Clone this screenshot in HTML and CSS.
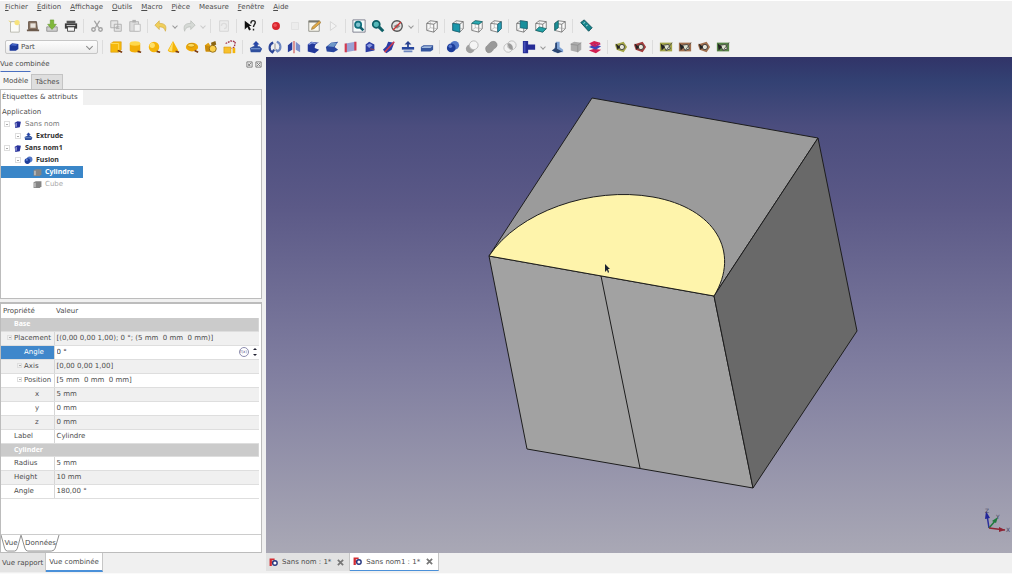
FILE: index.html
```html
<!DOCTYPE html>
<html lang="fr">
<head>
    <meta charset="UTF-8">
    <meta name="viewport" content="width=device-width, initial-scale=1.0">
    <title>Sans nom1 - Part</title>
    <link rel="stylesheet" href="styles.css">
</head>
<body>

    <!-- icons -->
    <svg class="defs" aria-hidden="true">
        <symbol id="new" viewBox="0 0 16 16"><path d="M4 3h7l3 3v9H4z" fill="#fbfbf8" stroke="#b5b5ac"/><circle cx="11.500" cy="4" r="3" fill="#f7e37c"/><path d="M2 2l3 2" stroke="#e8d46a"/></symbol>
        <symbol id="open" viewBox="0 0 16 16"><path d="M3 3h9l1 9H3z" fill="#8a7564" stroke="#5d4a3c"/><path d="M5 5h6v5H5z" fill="#e9e4dd"/><path d="M1 12h14v2H1z" fill="#6d5b4d"/></symbol>
        <symbol id="save" viewBox="0 0 16 16"><path d="M2 9h12v5H2z" fill="#cfcfcf" stroke="#8f8f8f"/><path d="M6 1h4v5h3l-5 6-5-6h3z" fill="#7fb83a" stroke="#5f9427" stroke-width=".6"/></symbol>
        <symbol id="print" viewBox="0 0 16 16"><path d="M3 2h10v3H3z" fill="#555"/><path d="M1 5h14v6H1z" fill="#3c3c3c"/><path d="M3 7h10v1H3z" fill="#ddd"/><path d="M4 9h8v5H4z" fill="#f6f6f6" stroke="#444"/></symbol>
        <symbol id="cut" viewBox="0 0 16 16"><g fill="none" stroke="#a2a2a2" stroke-width="1.600"><path d="M5 2l5 8M11 2l-5 8"/><circle cx="4" cy="12" r="2"/><circle cx="12" cy="12" r="2"/></g></symbol>
        <symbol id="copy" viewBox="0 0 16 16"><path d="M2 2h8v8H2zM6 6h8v8H6z" fill="#e6e6e6" stroke="#aaa"/><path d="M8 9h4M8 11h4" stroke="#aaa"/></symbol>
        <symbol id="paste" viewBox="0 0 16 16"><path d="M2 3h10v11H2z" fill="#dcdcdc" stroke="#b2b2b2"/><path d="M5 1h4v3H5z" fill="#b0b0b0"/><path d="M7 6h7v8H7z" fill="#f2f2f2" stroke="#bbb"/></symbol>
        <symbol id="undo" viewBox="0 0 16 16"><path d="M1 7l5-5v3c6 0 9 2 7 9-1-4-3-5-7-5v3z" fill="#f0cf5b" stroke="#cfa63a" stroke-width=".7"/></symbol>
        <symbol id="redo" viewBox="0 0 16 16"><path d="M15 7l-5-5v3c-6 0-9 2-7 9 1-4 3-5 7-5v3z" fill="#d5d9d5" stroke="#b2b6b2" stroke-width=".7"/></symbol>
        <symbol id="refresh" viewBox="0 0 16 16"><path d="M3 2h10v12H3z" fill="#ececec" stroke="#d2d2d2"/><path d="M5 8a3 3 0 1 1 3 3" fill="none" stroke="#dcdcdc" stroke-width="1.500"/></symbol>
        <symbol id="whats" viewBox="0 0 16 16"><path d="M2 2v10l3-3 2 4 2-1-2-4h3z" fill="#111"/><path d="M9 5c0-4 5-4 5-1 0 2-2 3-2 5M12 11v2" fill="none" stroke="#222" stroke-width="1.600"/></symbol>
        <symbol id="record" viewBox="0 0 16 16"><circle cx="8" cy="8" r="4.500" fill="#d9252d"/><circle cx="7" cy="7" r="2" fill="#ee5057"/></symbol>
        <symbol id="stop" viewBox="0 0 16 16"><path d="M4 4h8v8H4z" fill="#ececec" stroke="#e0e0e0"/></symbol>
        <symbol id="edit" viewBox="0 0 16 16"><path d="M2 2h12v12H2z" fill="#faf8ee" stroke="#8b8b84"/><path d="M2 2h12v2H2z" fill="#77776f"/><path d="M5 12l1-3 8-7 2 2-8 7z" fill="#e0a844" stroke="#7d6232" stroke-width=".6"/></symbol>
        <symbol id="play" viewBox="0 0 16 16"><path d="M5 3l7 5-7 5z" fill="#f3f3f3" stroke="#d3d3d3"/></symbol>
        <symbol id="fit" viewBox="0 0 16 16"><path d="M1 1h14v14H1z" fill="#f4fafa" stroke="#778"/><circle cx="7" cy="6.500" r="3.500" fill="#7fc3d0" stroke="#10707e" stroke-width="2"/><path d="M9 9l4 4" stroke="#10606e" stroke-width="3"/></symbol>
        <symbol id="fitsel" viewBox="0 0 16 16"><circle cx="6" cy="6" r="4" fill="#54b8b8" stroke="#0d5f66" stroke-width="2"/><path d="M9 9l5 5" stroke="#0d5f66" stroke-width="3.500"/></symbol>
        <symbol id="style" viewBox="0 0 16 16"><circle cx="8" cy="8" r="6" fill="#e4e4e4" stroke="#555" stroke-width="1.500"/><path d="M4 8l4-2 4 2-4 3z" fill="#8a8a8a"/><path d="M3.500 12.500l9-9" stroke="#c33" stroke-width="1.500"/></symbol>
        <!-- view cubes -->
        <symbol id="wire" viewBox="0 0 16 16"><path d="M2 5l4-3 8 1v8l-4 4-8-2zM2 5l8 1 4-3M10 6v9" fill="#fafafa" stroke="#666" stroke-width=".9" stroke-linejoin="round"/><path d="M6 2v8l8 1M6 10l-4 3" fill="none" stroke="#999" stroke-width=".6"/></symbol>
        <symbol id="v-front" viewBox="0 0 16 16"><use href="#wire"/><path d="M2 5l8 1v9l-8-2z" fill="#1a97ab" stroke="#0d5d70" stroke-width=".8"/></symbol>
        <symbol id="v-top" viewBox="0 0 16 16"><use href="#wire"/><path d="M2 5l4-3 8 1-4 3z" fill="#2aaab3" stroke="#0d6a70" stroke-width=".8"/></symbol>
        <symbol id="v-right" viewBox="0 0 16 16"><use href="#wire"/><path d="M10 6l4-3v8l-4 4z" fill="#2aa0b8" stroke="#0d5d70" stroke-width=".8"/></symbol>
        <symbol id="v-rear" viewBox="0 0 16 16"><use href="#wire"/><path d="M6 2l8 1v8l-8-1z" fill="#188f9c" stroke="#0d5d70" stroke-width=".8"/></symbol>
        <symbol id="v-bottom" viewBox="0 0 16 16"><use href="#wire"/><path d="M2 13l4-4 8 2-4 4z" fill="#22a2a8" stroke="#0d5d60" stroke-width=".8"/></symbol>
        <symbol id="v-left" viewBox="0 0 16 16"><use href="#wire"/><path d="M2 5l4-3v8l-4 3z" fill="#1a8f98" stroke="#0d5d60" stroke-width=".8"/></symbol>
        <symbol id="measure" viewBox="0 0 16 16"><path d="M2 4l4-3 9 9-4 4z" fill="#16858c" stroke="#0b4d55"/><path d="M5 5l2-1M8 8l2-1" stroke="#bfe8e8"/></symbol>
        <!-- primitives -->
        <symbol id="box" viewBox="0 0 16 16"><path d="M2 4l3-2h9v9l-3 3H2z" fill="#f6b90c" stroke="#d29206" stroke-width=".6"/><path d="M2 4h9v10" fill="none" stroke="#ffdf63"/><path d="M10 12l5 2" stroke="#7a3a10" stroke-width="2"/></symbol>
        <symbol id="cyl" viewBox="0 0 16 16"><path d="M2 4v8c1 3 11 3 12 0V4z" fill="#f2ae08"/><ellipse cx="8" cy="4" rx="6" ry="2.500" fill="#ffd84a"/><path d="M11 13l4 1" stroke="#7a3a10" stroke-width="2"/></symbol>
        <symbol id="sphere" viewBox="0 0 16 16"><circle cx="8" cy="8" r="6" fill="#f5b50a"/><circle cx="6" cy="6" r="3" fill="#ffe067"/><path d="M11 13l4 1" stroke="#7a3a10" stroke-width="2"/></symbol>
        <symbol id="cone" viewBox="0 0 16 16"><path d="M8 1l6 11c-1 3-11 3-12 0z" fill="#f4b40a"/><path d="M8 2l-1 11-4-1z" fill="#ffe067"/><path d="M11 13l4 1" stroke="#7a3a10" stroke-width="2"/></symbol>
        <symbol id="torus" viewBox="0 0 16 16"><ellipse cx="8" cy="8" rx="7" ry="5" fill="#eea807"/><ellipse cx="7" cy="6" rx="4" ry="2" fill="#ffdc5c" stroke="#b27a04" stroke-width=".7"/><path d="M11 12l4 2" stroke="#7a3a10" stroke-width="2"/></symbol>
        <symbol id="prims" viewBox="0 0 16 16"><path d="M1 6l4-3 2 3v7H2z" fill="#e0a010"/><path d="M8 3l5-2 1 4-5 3z" fill="#8a6410"/><path d="M1 6l5 1 1 6H2z" fill="#c98a0a"/><circle cx="10" cy="10" r="4" fill="#fbd04c" stroke="#8a6410"/></symbol>
        <symbol id="shape" viewBox="0 0 16 16"><path d="M1 8h8v7H1z" fill="#f7c02c" stroke="#d29206" stroke-width=".6"/><path d="M3 4l6-3 5 1-1 6-3 2" fill="none" stroke="#a03048" stroke-width="1.500" stroke-dasharray="2 1"/><path d="M11 9h3v6h-3z" fill="#f5b50a"/></symbol>
        <!-- part operations -->
        <symbol id="extrude" viewBox="0 0 16 16"><path d="M8 1l4 4h-2v3H6V5H4z" fill="#2746a6"/><path d="M1 9l4-2h7l3 3-2 4H2z" fill="#2f4f9e"/><path d="M2 10h11" stroke="#90aee0"/></symbol>
        <symbol id="revolve" viewBox="0 0 16 16"><path d="M6 3a6 6 0 0 0-1 11l2-3" fill="none" stroke="#2c4596" stroke-width="2.500"/><path d="M10 2a6 6 0 0 1 1 11l-2-2" fill="none" stroke="#6f89c2" stroke-width="2.500"/><path d="M8 4v8" stroke="#888"/></symbol>
        <symbol id="mirror" viewBox="0 0 16 16"><path d="M1 6l5-4v9l-5 3z" fill="#2a3f9c"/><path d="M10 2l5 4v8l-5-3z" fill="#7d8fcb"/><path d="M8 1v14" stroke="#c44" stroke-width="1.200"/></symbol>
        <symbol id="fillet" viewBox="0 0 16 16"><path d="M2 5l4-3 9 1c-4 1-5 3-5 6l5 2-5 4-8-2z" fill="#23389a"/><path d="M3 5l4-2 4 1" fill="none" stroke="#8ea1e2" stroke-width="1.500"/></symbol>
        <symbol id="chamfer" viewBox="0 0 16 16"><path d="M1 8l6-5 8-1-4 6 4 3-5 3-8-1z" fill="#29469f"/><path d="M7 3l7 0-4 5-7-1z" fill="#6f98c8"/></symbol>
        <symbol id="ruled" viewBox="0 0 16 16"><path d="M2 4l11-2v10L2 14z" fill="#9aa2d4"/><path d="M2 4v10M13 2v10" stroke="#d23a50" stroke-width="2.500"/></symbol>
        <symbol id="loft" viewBox="0 0 16 16"><path d="M3 5l4-3 6 3v7l-10 2z" fill="#2c3da4"/><path d="M4 6l4-2 3 2-4 3z" fill="#8696dd"/><path d="M8 10l5 1" stroke="#a44"/></symbol>
        <symbol id="sweep" viewBox="0 0 16 16"><path d="M1 11l4-4 2-5 7 1-3 8-6 4z" fill="#2b3da6"/><path d="M3 14L14 2" stroke="#cc3a50" stroke-width="2"/></symbol>
        <symbol id="offset" viewBox="0 0 16 16"><path d="M8 1l4 4h-3v3H7V5H4z" fill="#26408f"/><path d="M1 8h14v3H1z" fill="#27479f"/><path d="M3 12h10v2H3z" fill="#6d87bf"/></symbol>
        <symbol id="thick" viewBox="0 0 16 16"><path d="M1 8l3-2h11v5l-3 2H1z" fill="#34559e"/><path d="M2 8l3-1h9l-2 2H2z" fill="#a0b9dd"/></symbol>
        <symbol id="bool" viewBox="0 0 16 16"><circle cx="10" cy="6" r="5" fill="#5378c8"/><circle cx="6" cy="9" r="5" fill="#1d3d9a"/><circle cx="5" cy="7" r="2" fill="#587bd0"/></symbol>
        <symbol id="bcut" viewBox="0 0 16 16"><circle cx="6" cy="10" r="5" fill="#a0a0a0"/><circle cx="10" cy="6" r="5" fill="#f5f5f5" stroke="#b5b5b5"/></symbol>
        <symbol id="union" viewBox="0 0 16 16"><path d="M2 11c-1-4 3-5 4-7 3-4 9-3 9 2-1 4-4 3-5 6-2 3-7 4-8-1z" fill="#999" stroke="#7e7e7e" stroke-width=".6"/></symbol>
        <symbol id="inter" viewBox="0 0 16 16"><circle cx="6" cy="9" r="5" fill="#f3f3f3" stroke="#bbb"/><circle cx="10" cy="6" r="5" fill="none" stroke="#bbb"/><path d="M6 4c4 0 5 3 5 7-4 0-6-4-5-7z" fill="#999"/></symbol>
        <symbol id="join" viewBox="0 0 16 16"><path d="M1 1h6v4h8v6H7v4H1z" fill="#262c96"/><path d="M2 2h2v12H2z" fill="#4651b8"/></symbol>
        <symbol id="check" viewBox="0 0 16 16"><path d="M7 2h4v6l4 3v3H4z" fill="#7fa3d4"/><path d="M2 12l4-3V3h2v7l6 3-5 2z" fill="#2b4672"/></symbol>
        <symbol id="defeat" viewBox="0 0 16 16"><path d="M2 4l4-2 8 1v8l-4 3-8-2z" fill="#acacac"/><path d="M2 5l8 1 4-3M10 6v8" fill="none" stroke="#909090"/></symbol>
        <symbol id="section" viewBox="0 0 16 16"><path d="M1 4l6-3 7 2-6 3zM1 12l6-2 8 1-6 4z" fill="#d21f52"/><path d="M1 8l7-3 7 2-6 4z" fill="#3c46b8"/><path d="M3 5l5 2 6-3" fill="none" stroke="#c01f66" stroke-width="2"/></symbol>
        <!-- measuring tapes -->
        <symbol id="tape" viewBox="0 0 16 16"><path d="M1 5l10-3 4 6-4 6-8-3z" fill="currentColor"/><circle cx="9" cy="8" r="3" fill="#e7e7dc" stroke="#333"/><path d="M2 4l5 4-3 3z" fill="#222"/></symbol>
        <symbol id="tapebox" viewBox="0 0 16 16"><path d="M1 3h14v10H1z" fill="currentColor"/><path d="M5 6l6-1 2 5-5 2z" fill="#dfe3cf" stroke="#444"/><path d="M2 4l5 4-4 4z" fill="#222"/><path d="M8 12l7-9" stroke="#555"/></symbol>
        <!-- tree and tabs -->
        <symbol id="doc" viewBox="0 0 16 16"><path d="M3 5l5-3 6 1-2 10-8 1z" fill="#26309a"/><path d="M4 6l3-1v7H4z" fill="#8b90cd"/></symbol>
        <symbol id="graybox" viewBox="0 0 16 16"><path d="M1 4l4-2h10v9l-3 3H1z" fill="#858585"/><path d="M2 5h3v8H2z" fill="#bbb"/></symbol>
        <symbol id="part" viewBox="0 0 16 16"><path d="M1 5l4-3 10 1v8l-4 3H1z" fill="#1d399b"/><path d="M2 5l4-2 8 1-3 2z" fill="#4e6fd0"/></symbol>
        <symbol id="fc" viewBox="0 0 16 16"><path d="M1 1h9v3H5v2h4v3H5v5H1z" fill="#d22c32"/><circle cx="10.500" cy="9" r="4" fill="#fff" stroke="#26367f" stroke-width="2.500"/></symbol>
    </svg>

    <div class="wrap">
        <nav class="menu">
            <a href="#"><u>F</u>ichier</a>
            <a href="#"><u>É</u>dition</a>
            <a href="#"><u>A</u>ffichage</a>
            <a href="#"><u>O</u>utils</a>
            <a href="#"><u>M</u>acro</a>
            <a href="#"><u>P</u>ièce</a>
            <a href="#">Measure</a>
            <a href="#"><u>F</u>enêtre</a>
            <a href="#"><u>A</u>ide</a>
        </nav>

        <div class="toolbar">
            <button aria-label="Nouveau"><svg><use href="#new"/></svg></button>
            <button aria-label="Ouvrir"><svg><use href="#open"/></svg></button>
            <button aria-label="Enregistrer"><svg><use href="#save"/></svg></button>
            <button aria-label="Imprimer"><svg><use href="#print"/></svg></button>
            <i class="sep"></i>
            <button aria-label="Couper"><svg><use href="#cut"/></svg></button>
            <button aria-label="Copier"><svg><use href="#copy"/></svg></button>
            <button aria-label="Coller"><svg><use href="#paste"/></svg></button>
            <i class="sep"></i>
            <button aria-label="Annuler"><svg><use href="#undo"/></svg></button>
            <button class="arrow" aria-label="Historique annuler"></button>
            <button aria-label="Rétablir"><svg><use href="#redo"/></svg></button>
            <button class="arrow light" aria-label="Historique rétablir"></button>
            <i class="sep"></i>
            <button aria-label="Rafraîchir"><svg><use href="#refresh"/></svg></button>
            <i class="sep"></i>
            <button aria-label="Qu'est-ce que c'est ?"><svg><use href="#whats"/></svg></button>
            <i class="sep"></i>
            <button aria-label="Enregistrer une macro"><svg><use href="#record"/></svg></button>
            <button aria-label="Arrêter"><svg><use href="#stop"/></svg></button>
            <button aria-label="Macros"><svg><use href="#edit"/></svg></button>
            <button aria-label="Exécuter"><svg><use href="#play"/></svg></button>
            <i class="sep"></i>
            <button aria-label="Tout afficher"><svg><use href="#fit"/></svg></button>
            <button aria-label="Afficher la sélection"><svg><use href="#fitsel"/></svg></button>
            <button aria-label="Style de représentation"><svg><use href="#style"/></svg></button>
            <button class="arrow" aria-label="Styles"></button>
            <i class="sep"></i>
            <button aria-label="Axonométrique"><svg><use href="#wire"/></svg></button>
            <i class="sep"></i>
            <button aria-label="Face"><svg><use href="#v-front"/></svg></button>
            <button aria-label="Dessus"><svg><use href="#v-top"/></svg></button>
            <button aria-label="Droite"><svg><use href="#v-right"/></svg></button>
            <i class="sep"></i>
            <button aria-label="Arrière"><svg><use href="#v-rear"/></svg></button>
            <button aria-label="Dessous"><svg><use href="#v-bottom"/></svg></button>
            <button aria-label="Gauche"><svg><use href="#v-left"/></svg></button>
            <i class="sep"></i>
            <button aria-label="Mesurer la distance"><svg><use href="#measure"/></svg></button>
        </div>

        <div class="toolbar">
            <div class="workbench">
                <svg><use href="#part"/></svg>
                <select aria-label="Atelier"><option>Part</option></select>
            </div>
            <i class="sep"></i>
            <button aria-label="Cube"><svg><use href="#box"/></svg></button>
            <button aria-label="Cylindre"><svg><use href="#cyl"/></svg></button>
            <button aria-label="Sphère"><svg><use href="#sphere"/></svg></button>
            <button aria-label="Cône"><svg><use href="#cone"/></svg></button>
            <button aria-label="Tore"><svg><use href="#torus"/></svg></button>
            <button aria-label="Primitives"><svg><use href="#prims"/></svg></button>
            <button aria-label="Générateur de formes"><svg><use href="#shape"/></svg></button>
            <i class="sep"></i>
            <button aria-label="Extrusion"><svg><use href="#extrude"/></svg></button>
            <button aria-label="Révolution"><svg><use href="#revolve"/></svg></button>
            <button aria-label="Miroir"><svg><use href="#mirror"/></svg></button>
            <button aria-label="Congé"><svg><use href="#fillet"/></svg></button>
            <button aria-label="Chanfrein"><svg><use href="#chamfer"/></svg></button>
            <button aria-label="Surface réglée"><svg><use href="#ruled"/></svg></button>
            <button aria-label="Lissage"><svg><use href="#loft"/></svg></button>
            <button aria-label="Balayage"><svg><use href="#sweep"/></svg></button>
            <button aria-label="Décalage"><svg><use href="#offset"/></svg></button>
            <button aria-label="Épaisseur"><svg><use href="#thick"/></svg></button>
            <i class="sep"></i>
            <button aria-label="Opération booléenne"><svg><use href="#bool"/></svg></button>
            <button aria-label="Soustraction"><svg><use href="#bcut"/></svg></button>
            <button aria-label="Union"><svg><use href="#union"/></svg></button>
            <button aria-label="Intersection"><svg><use href="#inter"/></svg></button>
            <button aria-label="Joindre"><svg><use href="#join"/></svg></button>
            <button class="arrow" aria-label="Outils de jonction"></button>
            <button aria-label="Vérifier la géométrie"><svg><use href="#check"/></svg></button>
            <button aria-label="Defeaturing"><svg><use href="#defeat"/></svg></button>
            <button aria-label="Coupes"><svg><use href="#section"/></svg></button>
            <i class="sep"></i>
            <button class="olive" aria-label="Mesure linéaire"><svg><use href="#tape"/></svg></button>
            <button class="red" aria-label="Mesure angulaire"><svg><use href="#tape"/></svg></button>
            <i class="sep"></i>
            <button class="olive" aria-label="Effacer les mesures"><svg><use href="#tapebox"/></svg></button>
            <button class="brown" aria-label="Basculer tout"><svg><use href="#tapebox"/></svg></button>
            <button class="brown" aria-label="Basculer 3D"><svg><use href="#tape"/></svg></button>
            <button class="green" aria-label="Basculer delta"><svg><use href="#tapebox"/></svg></button>
        </div>

        <div class="main">
            <div class="side">
                <div class="title">
                    <span>Vue combinée</span>
                    <button aria-label="Détacher"><svg viewBox="0 0 8 8"><path d="M1 1h6v6H1zM3 5l3-3M3 3v2h2"/></svg></button>
                    <button aria-label="Fermer"><svg viewBox="0 0 8 8"><path d="M1 1h6v6H1zM2 2l4 4M6 2l-4 4"/></svg></button>
                </div>
                <div class="tabs">
                    <button class="on">Modèle</button>
                    <button>Tâches</button>
                </div>

                <div class="tree">
                    <div class="tree_head"><span>Étiquettes &amp; attributs</span></div>
                    <ul>
                        <li><div class="row root">Application</div></li>
                        <li><div class="row lv1 dim"><i class="exp minus"></i><svg><use href="#doc"/></svg>Sans nom</div></li>
                        <li><div class="row lv2 bold"><i class="exp plus"></i><svg><use href="#extrude"/></svg>Extrude</div></li>
                        <li><div class="row lv1 bold"><i class="exp minus"></i><svg><use href="#doc"/></svg>Sans nom1</div></li>
                        <li><div class="row lv2 bold"><i class="exp minus"></i><svg><use href="#bool"/></svg>Fusion</div></li>
                        <li><div class="row lv3 bold sel"><svg><use href="#graybox"/></svg>Cylindre</div></li>
                        <li><div class="row lv3 off"><svg><use href="#graybox"/></svg>Cube</div></li>
                    </ul>
                </div>

                <div class="props">
                    <table>
                        <thead>
                            <tr><th>Propriété</th><th>Valeur</th></tr>
                        </thead>
                        <tbody>
                            <tr class="group"><td colspan="2">Base</td></tr>
                            <tr class="alt"><td class="p1"><i class="exp minus"></i>Placement</td><td>[(0,00 0,00 1,00); 0 °; (5 mm&nbsp; 0 mm&nbsp; 0 mm)]</td></tr>
                            <tr class="edit">
                                <td class="p2"><label for="angle">Angle</label></td>
                                <td>
                                    <div class="spin">
                                        <input id="angle" type="text" value="0 °">
                                        <button class="fx" aria-label="Expression">f(x)</button>
                                        <button class="step" aria-label="Incrémenter"><svg viewBox="0 0 6 12"><path d="M1 4l2-2 2 2zM1 8l2 2 2-2z"/></svg></button>
                                    </div>
                                </td>
                            </tr>
                            <tr class="alt"><td class="p2"><i class="exp plus"></i>Axis</td><td>[0,00 0,00 1,00]</td></tr>
                            <tr><td class="p2"><i class="exp minus"></i>Position</td><td>[5 mm&nbsp; 0 mm&nbsp; 0 mm]</td></tr>
                            <tr class="alt"><td class="p3">x</td><td>5 mm</td></tr>
                            <tr><td class="p3">y</td><td>0 mm</td></tr>
                            <tr class="alt"><td class="p3">z</td><td>0 mm</td></tr>
                            <tr><td class="p1">Label</td><td>Cylindre</td></tr>
                            <tr class="group"><td colspan="2">Cylinder</td></tr>
                            <tr><td class="p1">Radius</td><td>5 mm</td></tr>
                            <tr class="alt"><td class="p1">Height</td><td>10 mm</td></tr>
                            <tr><td class="p1">Angle</td><td>180,00 °</td></tr>
                        </tbody>
                    </table>
                    <div class="sheet_tabs">
                        <button class="vue"><svg viewBox="0 0 22 18" preserveAspectRatio="none"><path d="M0 0l4 14q1 3 3 3h8q2 0 3-3l4-14"/></svg><span>Vue</span></button>
                        <button class="data"><svg viewBox="0 0 40 18" preserveAspectRatio="none"><path d="M0 0l4 14q1 3 3 3h24q3 0 4-3l4-14"/></svg><span>Données</span></button>
                    </div>
                </div>

                <div class="dock_tabs">
                    <button>Vue rapport</button>
                    <button class="on">Vue combinée</button>
                </div>
            </div>

            <div class="view">
                <div class="canvas">
                    <svg viewBox="0 0 746 496" role="img" aria-label="Vue 3D">
                        <g stroke="#1d1d1d" stroke-linejoin="round">
                            <path d="M326 41L552 81 448 239 223 199z" fill="#9b9b9b"/>
                            <path d="M223 199L448 239 487 431 261 392z" fill="#a2a2a2"/>
                            <path d="M552 81L591 274 487 431 448 239z" fill="#696969"/>
                            <path d="M223 199C252 155 325 129 387 140S475 195 448 239z" fill="#fef4ab"/>
                            <path d="M335 219L374 411" fill="none"/>
                        </g>
                        <path d="M339 207v8l2-2 1 3 1-1-1-3h2z" fill="#1b2230"/>
                        <!-- axis cross -->
                        <g fill="none" stroke-width="1.500">
                            <path d="M723 471l-2-13" stroke="#2b2f9c"/>
                            <path d="M723 471l6-7" stroke="#1f7a3c"/>
                            <path d="M723 471l16 2" stroke="#8e2434"/>
                        </g>
                        <path d="M719 462l1-8 4 7z" fill="#23279a"/>
                        <path d="M726 464l6-4-2 6z" fill="#1f7a3c"/>
                        <path d="M733 470l6 3-6 2z" fill="#8e2434"/>
                        <g class="axis"><text x="719" y="456">Z</text><text x="730" y="462">Y</text><text x="740" y="475">X</text></g>
                    </svg>
                </div>
                <div class="doc_tabs">
                    <div class="doc_tab"><svg><use href="#fc"/></svg><a href="#">Sans nom : 1*</a><button aria-label="Fermer Sans nom"><svg viewBox="0 0 8 8"><path d="M1 1l6 6M7 1L1 7"/></svg></button></div>
                    <div class="doc_tab on"><svg><use href="#fc"/></svg><a href="#">Sans nom1 : 1*</a><button aria-label="Fermer Sans nom1"><svg viewBox="0 0 8 8"><path d="M1 1l6 6M7 1L1 7"/></svg></button></div>
                </div>
            </div>
        </div>
    </div>

</body>
</html>
```
FILE: styles.css
```css
*{margin:0;padding:0;box-sizing:border-box;}
body{font-family:"DejaVu Sans",sans-serif;font-size:7px;line-height:12px;color:#4c4c4c;background:#f0f0f0;}
button,input,select{font:inherit;color:inherit;border:0;background:none;}
a{color:inherit;text-decoration:none;}
ul{list-style:none;}
svg{display:block;}
.defs{position:absolute;width:0;height:0;}

.wrap{display:flex;flex-direction:column;height:100vh;border-top:1px solid #fff;border-bottom:1px solid #fafafa;}

/* menu */
.menu{display:flex;gap:9px;padding:0 5px;height:14px;}

/* toolbars */
.toolbar{display:flex;align-items:center;height:21px;padding:0 4px;}
.toolbar button{width:19px;height:20px;display:flex;align-items:center;justify-content:center;flex:none;}
.toolbar svg{width:14px;height:14px;}
.toolbar .sep{width:1px;height:14px;margin:0 3px;background:#dcdcdc;flex:none;}
.toolbar .arrow{width:9px;}
.toolbar .arrow::before{content:"";width:3px;height:3px;border:solid #999;border-width:0 1px 1px 0;transform:rotate(45deg);}
.toolbar .light::before{border-color:#ccc;}
.toolbar .olive{color:#a3a548;}
.toolbar .red{color:#a23d3d;}
.toolbar .brown{color:#a1704f;}
.toolbar .green{color:#568446;}
.workbench{display:flex;align-items:center;width:93px;height:14px;margin:0 1px;padding:0 3px;border:1px solid #c6c6c6;border-radius:2px;background:linear-gradient(#fdfdfd,#ececec);}
.workbench svg{width:10px;height:10px;}
.workbench select{flex:1;appearance:none;padding-left:2px;line-height:12px;}
.workbench::after{content:"";width:4px;height:4px;margin-right:2px;border:solid #888;border-width:0 1px 1px 0;transform:rotate(45deg);}

/* left dock */
.main{flex:1;display:flex;min-height:0;}
.side{width:266px;flex:none;display:flex;flex-direction:column;padding-right:4px;}
.title{display:flex;align-items:center;height:14px;gap:2px;}
.title span{flex:1;}
.title svg{width:7px;height:7px;fill:none;stroke:#777;}
.tabs{display:flex;align-items:flex-end;height:18px;}
.tabs button{height:15px;padding:0 3px;background:#dedede;border:1px solid #c4c4c4;border-bottom:0;}
.tabs .on{height:18px;padding:0 2px;background:#f6f6f6;border-color:#f6f6f6;border-top:1px solid #4a6fc0;}

.tree{flex:1;min-height:0;border:1px solid #bcbcbc;background:#fff;}
.tree_head{height:15px;background:#f0f0f0;}
.tree_head span{display:inline-block;width:82px;height:15px;line-height:15px;padding-left:1px;background:#fff;}
.row{display:flex;align-items:center;width:82px;height:12px;white-space:nowrap;}
.tree li:first-child .row{height:13px;}
.row svg{width:9px;height:9px;margin:0 3px;}
.exp{flex:none;width:6px;height:6px;border:1px solid #dedede;display:inline-block;background:linear-gradient(#aaa,#aaa) center/2px 1px no-repeat;}
.root{padding-left:1px;}
.lv1{padding-left:3px;}
.lv2{padding-left:14px;}
.lv3{padding-left:29px;}
.dim{color:#777;}
.bold{font-family:"Noto Sans",sans-serif;font-weight:bold;color:#333;}
.off{color:#aaa;}
.sel{background:#3a86c8;color:#fff;}

/* properties */
.props{height:251px;margin-top:3px;border:1px solid #bcbcbc;border-top-width:2px;background:#fff;display:flex;flex-direction:column;justify-content:space-between;}
.props table{width:calc(100% - 2px);border-collapse:collapse;table-layout:fixed;}
.props th{height:14px;font-weight:normal;text-align:left;padding-left:2px;}
.props th:first-child{width:53px;}
.props td{height:14px;padding-left:2px;line-height:12px;border-bottom:1px solid #dedede;white-space:nowrap;}
.props td:first-child{border-right:1px solid #d6d6d6;}
.props .group td{height:13px;padding-left:13px;background:#cbcbcb;color:#fff;font-family:"Noto Sans",sans-serif;font-weight:bold;}
.props .alt{background:#f0f0f0;}
.props .exp{width:5px;height:5px;margin:0 2px 0 0;}
.props .p1{padding-left:13px;}
.props .p2{padding-left:23px;}
.props .p3{padding-left:34px;}
.props .p1 .exp{margin-left:-7px;}
.props .p2 .exp{margin-left:-7px;}
.props .edit td:first-child{background:#3f87cb;color:#fff;}
.spin{display:flex;align-items:center;height:12px;}
.spin input{flex:1;min-width:0;outline:0;color:#333;}
.spin .fx{width:10px;height:10px;border:1px solid #8d8db0;border-radius:50%;font-size:4px;line-height:8px;color:#55558a;}
.spin .step{width:10px;padding-left:3px;}
.spin .step svg{width:6px;height:12px;fill:#223;}

.sheet_tabs{display:flex;height:18px;border-top:1px solid #ccc;}
.sheet_tabs button{display:grid;height:17px;}
.sheet_tabs svg,.sheet_tabs span{grid-area:1/1;}
.sheet_tabs svg{width:100%;height:17px;fill:none;stroke:#888;}
.sheet_tabs span{line-height:16px;text-align:center;}
.sheet_tabs .vue{width:20px;}
.sheet_tabs .data{width:39px;}

.dock_tabs{display:flex;height:20px;padding-bottom:1px;}
.dock_tabs button{padding:0 2px;background:#e4e4e4;border-right:1px solid #c6c6c6;}
.dock_tabs .on{padding:0 3px;background:#fff;border-bottom:2px solid #4a90d9;}

/* 3d view */
.view{flex:1;min-width:0;display:flex;flex-direction:column;}
.canvas{flex:1;min-height:0;background:linear-gradient(#313468 0,#334173 5%,#4b4d7e 14%,#5b5987 30%,#7f7d9f 62%,#a9a8b5 100%);}
.canvas svg{width:100%;height:100%;}
.axis{font-size:6px;fill:#444466;}
.doc_tabs{display:flex;height:20px;}
.doc_tab{display:flex;align-items:center;gap:4px;height:18px;padding:0 5px 0 3px;background:#e2e2e2;border-right:1px solid #c6c6c6;}
.doc_tab svg{width:9px;height:9px;}
.doc_tab button{margin-left:2px;}
.doc_tab button svg{width:7px;height:7px;fill:none;stroke:#777;stroke-width:2;}
.doc_tab.on{background:#fff;border-bottom:1px solid #4a90d9;}
```
